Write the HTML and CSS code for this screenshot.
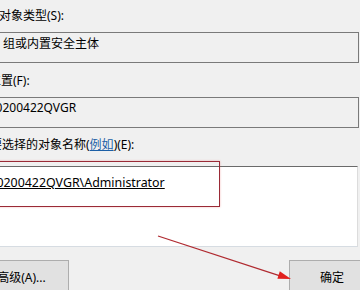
FILE: index.html
```html
<!DOCTYPE html>
<html lang="zh-CN">
<head>
<meta charset="utf-8">
<link rel="stylesheet" href="styles.css">
</head>
<body>
<div class="dialog">
  <div class="label l1">选择此对象类型(S):</div>
  <div class="field f1">用户、组或内置安全主体</div>
  <div class="label l2">查找位置(F):</div>
  <div class="field f2">PC-20200422QVGR</div>
  <div class="label l3">输入要选择的对象名称(<span class="link">例如</span>)(E):</div>
  <div class="names"><span class="name">PC-20200422QVGR\Administrator</span></div>
  <div class="buttons">
    <div class="btn adv">高级(A)...</div>
    <div class="btn ok">确定</div>
  </div>
</div>
<div class="mark"></div>
<svg class="arrow" width="360" height="290" viewBox="0 0 360 290">
  <line x1="158" y1="236" x2="280" y2="275.8" stroke="#b02a30" stroke-width="1.3"/>
  <polygon points="291,279 277.4,278.8 279.8,271.2" fill="#e0201e"/>
</svg>
</body>
</html>
```

FILE: styles.css
```css
html, body {
  margin: 0;
  padding: 0;
}
body {
  width: 360px;
  height: 290px;
  overflow: hidden;
  position: relative;
  background: #f0f0f0;
  font-family: "Noto Sans", "Noto Sans CJK SC", sans-serif;
  font-size: 12px;
  color: #000;
}
.dialog {
  margin-left: -36px;
  width: 411px;
  display: flex;
  flex-direction: column;
}
.label {
  line-height: 16px;
  height: 16px;
  white-space: nowrap;
}
.l1 { margin-top: 8px; margin-left: -1px; }
.l2 { margin-top: 10px; padding-left: 1px; }
.l3 { margin-top: 9px; padding-left: 2px; }
.link {
  color: #1c5fa6;
  text-decoration: underline;
}
.field {
  box-sizing: border-box;
  width: 395px;
  height: 31px;
  border: 1px solid #7a7a7a;
  padding: 3px 4px 0 2px;
  line-height: 16px;
  white-space: nowrap;
  margin-top: 8px;
}
.f2 { padding-top: 2px; padding-left: 5px; }
.names {
  box-sizing: border-box;
  width: 394px;
  height: 81px;
  margin-top: 13px;
  background: #fff;
  border-top: 1px solid #6a6a6a;
  border-right: 1px solid #dcdcdc;
  border-bottom: 1px solid #d6dce2;
  padding: 8px 4px 0 6px;
  line-height: 16px;
  white-space: nowrap;
  font-size: 12.4px;
}
.name {
  text-decoration: underline;
}
.buttons {
  margin-top: 13px;
  display: flex;
  justify-content: space-between;
}
.btn {
  box-sizing: border-box;
  height: 34px;
  background: #e1e1e1;
  border: 1px solid #adadad;
  display: flex;
  align-items: center;
  justify-content: center;
  white-space: nowrap;
}
.adv { width: 105px; padding-left: 10px; }
.ok { width: 86px; }
.mark {
  position: absolute;
  left: -6px;
  top: 161px;
  width: 224px;
  height: 44px;
  border: 1.5px solid #9a2a36;
  box-shadow: 0 0 2px rgba(230, 60, 60, 0.35);
}
.arrow {
  position: absolute;
  left: 0;
  top: 0;
}
```
